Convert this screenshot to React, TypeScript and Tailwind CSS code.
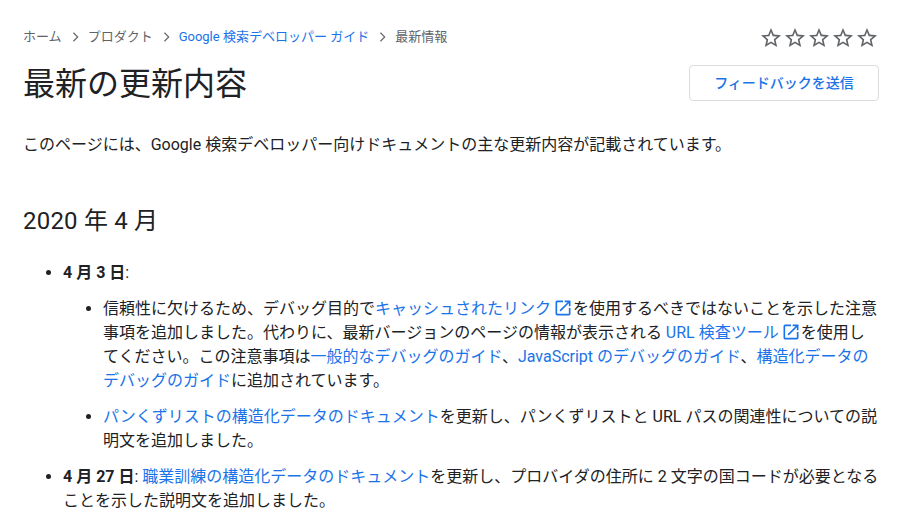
const linkClass = 'text-[#1a73e8]'

function ExternalIcon() {
  return (
    <svg className="ml-[2px] inline-block h-5 w-5 align-[-4px]" viewBox="0 0 24 24" fill="#1a73e8">
      <path d="M19 19H5V5h7V3H5a2 2 0 0 0-2 2v14a2 2 0 0 0 2 2h14a2 2 0 0 0 2-2v-7h-2v7zM14 3v2h3.59l-9.83 9.83 1.41 1.41L19 6.41V10h2V3h-7z" />
    </svg>
  )
}

function Chevron() {
  return (
    <svg className="mx-[6px] h-[14px] w-[14px]" viewBox="0 0 24 24" fill="#5f6368">
      <path d="M8.6 5.4 10 4l8 8-8 8-1.4-1.4 6.6-6.6z" />
    </svg>
  )
}

function App() {
  return (
    <div
      className="h-[522px] w-[913px] overflow-hidden bg-white pl-[23px] pr-[34px] text-[16px] leading-6 text-[#202124]"
      style={{ fontFamily: 'Roboto, "Noto Sans CJK JP", sans-serif' }}
    >
      <div className="flex h-[72px] items-start justify-between pt-[27px]">
        <nav className="mt-px flex items-center text-[13px] leading-[18px] text-[#5f6368]">
          <span>ホーム</span>
          <Chevron />
          <span>プロダクト</span>
          <Chevron />
          <span className={linkClass}>Google 検索デベロッパー ガイド</span>
          <Chevron />
          <span>最新情報</span>
        </nav>
        <div className="-mt-px flex text-[#5f6368]">
          {[0, 1, 2, 3, 4].map((i) => (
            <svg key={i} className="h-6 w-6" viewBox="0 0 24 24" fill="#5f6368">
              <path d="M22 9.24l-7.19-.62L12 2 9.19 8.63 2 9.24l5.46 4.73L5.82 21 12 17.27 18.18 21l-1.63-7.03L22 9.24zM12 15.4l-3.76 2.27 1-4.28-3.32-2.88 4.38-.38L12 6.1l1.71 4.04 4.38.38-3.32 2.88 1 4.28L12 15.4z" />
            </svg>
          ))}
        </div>
      </div>

      <div className="flex items-start justify-between">
        <h1 className="mt-[-8px] text-[32px] font-normal leading-10">最新の更新内容</h1>
        <button
          className={`mt-[-7px] h-9 w-[190px] rounded border border-[#dadce0] bg-white text-[14px] font-medium ${linkClass}`}
          type="button"
        >
          フィードバックを送信
        </button>
      </div>

      <p className="mt-[29px]">
        このページには、Google 検索デベロッパー向けドキュメントの主な更新内容が記載されています。
      </p>

      <h2 className="mt-[48px] text-[24px] font-normal leading-8 tracking-[0.2px]">2020 年 4 月</h2>

      <ul className="mt-[24px] list-disc pl-10">
        <li>
          <p>
            <strong className="font-bold">4 月 3 日</strong>:
          </p>
          <ul className="mt-[12px] list-disc pl-10">
            <li>
              信頼性に欠けるため、デバッグ目的で
              <span className={linkClass}>キャッシュされたリンク</span>
              <ExternalIcon />
              を使用するべきではないことを示した注意事項を追加しました。代わりに、最新バージョンのページの情報が表示される{' '}
              <span className={linkClass}>URL 検査ツール</span>
              <ExternalIcon />
              を使用してください。この注意事項は
              <span className={linkClass}>一般的なデバッグのガイド</span>、
              <span className={linkClass}>JavaScript のデバッグのガイド</span>、
              <span className={linkClass}>構造化データのデバッグのガイド</span>
              に追加されています。
            </li>
            <li className="mt-[12px]">
              <span className={linkClass}>パンくずリストの構造化データのドキュメント</span>
              を更新し、パンくずリストと URL パスの関連性についての説明文を追加しました。
            </li>
          </ul>
        </li>
        <li className="mt-[12px]">
          <strong className="font-bold">4 月 27 日</strong>:{' '}
          <span className={linkClass}>職業訓練の構造化データのドキュメント</span>
          を更新し、プロバイダの住所に 2 文字の国コードが必要となることを示した説明文を追加しました。
        </li>
      </ul>
    </div>
  )
}

export default App
